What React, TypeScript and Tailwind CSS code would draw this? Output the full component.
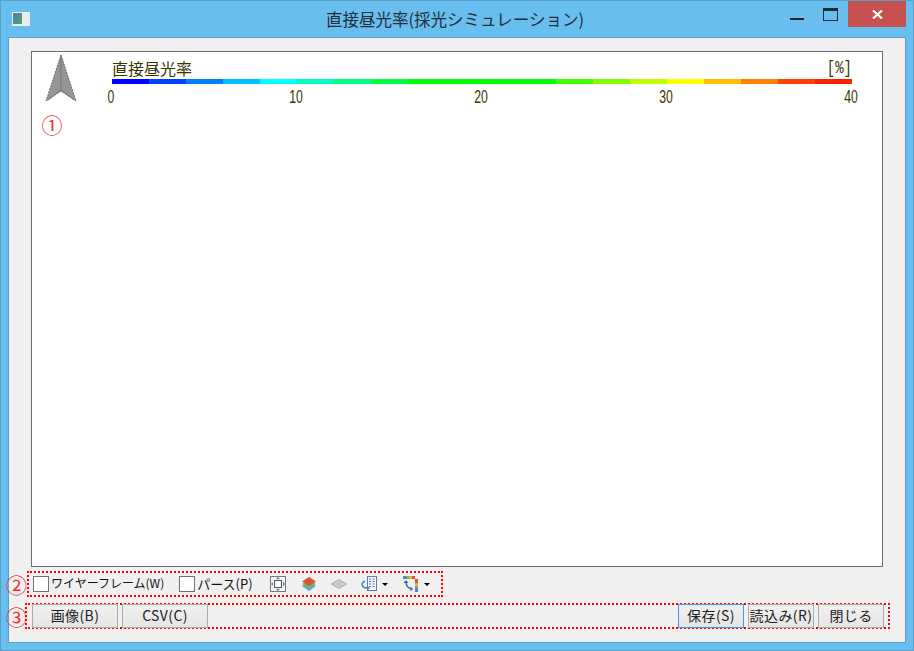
const font = "font-['Noto_Sans_CJK_JP','Noto_Sans',sans-serif]";

const legendColors = [
  "#0000ff", "#0040ff", "#0080ff", "#00c0ff", "#00ffff",
  "#00ffc0", "#00ff80", "#00ff40", "#00ff00", "#00ff00",
  "#00ff00", "#00ff00", "#40ff00", "#80ff00", "#c0ff00",
  "#ffff00", "#ffc000", "#ff8000", "#ff4000", "#ff2000",
];

const ticks = ["0", "10", "20", "30", "40"];

function NorthArrow() {
  return (
    <svg width="32" height="50" viewBox="0 0 32 50" className="shrink-0">
      <path d="M16 1 L31 47 L16 37 L1 47 Z" fill="#969696" stroke="#6a6a6a" strokeWidth="1" strokeDasharray="2 1" />
      <path d="M16 1 V37 M16 36 L3 46 M16 36 L29 46" fill="none" stroke="#777" strokeWidth="1" />
    </svg>
  );
}

function Legend() {
  return (
    <div className="flex w-[750px] flex-col">
      <div className="flex h-[20px] w-[740px] items-center justify-between text-[16px] leading-none text-[#3a3300]">
        <span className={font}>直接昼光率</span>
        <span className="origin-right scale-y-[1.25] font-['Liberation_Mono',monospace] text-[14px]">[%]</span>
      </div>
      <div className="mt-[1px] flex h-[5px] w-[740px]">
        {legendColors.map((c, i) => (
          <div key={i} className="h-full w-[37px]" style={{ backgroundColor: c }} />
        ))}
      </div>
      <div className="-ml-[11px] mt-[4px] flex w-[760px] justify-between font-['Liberation_Sans',sans-serif] text-[18px] leading-[18px] text-[#3a3300]">
        {ticks.map((t) => (
          <span key={t} className="w-[20px] scale-x-[0.68] text-center">{t}</span>
        ))}
      </div>
    </div>
  );
}

function CheckItem({ label, size }: { label: string; size: string }) {
  return (
    <label className="flex items-center gap-[2px]">
      <span className="h-[16px] w-[16px] border border-[#707070] bg-white" />
      <span className={`${font} ${size} pb-[2px] leading-none text-[#111]`}>{label}</span>
    </label>
  );
}

function FitIcon() {
  return (
    <svg width="16" height="16" viewBox="0 0 16 16">
      <rect x="0.5" y="0.5" width="15" height="15" fill="#f4f4f4" stroke="#777" />
      <rect x="4.5" y="4.5" width="7" height="7" fill="#fff" stroke="#555" />
      <path d="M8 1 L10 3 H6 Z M8 15 L10 13 H6 Z M1 8 L3 6 V10 Z M15 8 L13 6 V10 Z" fill="#3d83c4" />
    </svg>
  );
}

function LayersIcon() {
  return (
    <svg width="16" height="16" viewBox="0 0 16 16">
      <path d="M1 10 L8 6 L15 10 L8 15 Z" fill="#5da8c4" />
      <path d="M1 8 L8 4 L15 8 L8 12 Z" fill="#80b070" />
      <path d="M1 5.500 L8 1 L15 5.500 L8 10 Z" fill="#d9552f" />
    </svg>
  );
}

function PlaneIcon() {
  return (
    <svg width="16" height="10" viewBox="0 0 16 10">
      <path d="M0.500 5 L8 0.500 L15.500 5 L8 9.500 Z" fill="#d4d4d4" stroke="#a5a5a5" />
      <path d="M4 2.800 L12 7.200 M12 2.800 L4 7.200 M8 0.500 V9.500" stroke="#bdbdbd" fill="none" />
    </svg>
  );
}

function BuildingIcon() {
  return (
    <svg width="16" height="16" viewBox="0 0 16 16">
      <rect x="6.500" y="0.500" width="9" height="14" fill="#f2f6fa" stroke="#5f7f9f" />
      <path d="M8 3h2M11.500 3h2M8 5.500h2M11.500 5.500h2M8 8h2M11.500 8h2M8 10.500h2M11.500 10.500h2" stroke="#5f7f9f" />
      <path d="M4 5 Q0 7 1.500 10 Q3 12.500 7 12" fill="none" stroke="#3d83c4" strokeWidth="1.500" />
      <path d="M6 9.500 L9 12 L6 14.500 Z" fill="#3d83c4" />
    </svg>
  );
}

function PaletteIcon() {
  return (
    <svg width="16" height="16" viewBox="0 0 16 16">
      <rect x="0" y="0" width="3" height="3" fill="#4f86c6" />
      <rect x="3" y="0" width="3" height="3" fill="#7fb069" />
      <rect x="6" y="0" width="3" height="3" fill="#e8b04a" />
      <rect x="9" y="0" width="3" height="3" fill="#d9552f" />
      <rect x="12" y="3" width="3" height="4" fill="#d9552f" />
      <rect x="12" y="7" width="3" height="3" fill="#e8b04a" />
      <rect x="12" y="10" width="3" height="2" fill="#7fb069" />
      <rect x="12" y="12" width="3" height="4" fill="#4f86c6" />
      <path d="M3 6 Q3 12 9 13" fill="none" stroke="#2f6fb5" strokeWidth="1.500" />
      <path d="M3 4 L5.500 7 H0.500 Z M10 13 L7.500 10.500 V15.500 Z" fill="#2f6fb5" />
    </svg>
  );
}

function Caret() {
  return <span className="ml-[5px] h-0 w-0 border-x-[3px] border-t-[3px] border-x-transparent border-t-black" />;
}

function Btn({ label, w, focus }: { label: string; w: string; focus?: boolean }) {
  return (
    <button
      className={`${w} h-[24px] border bg-gradient-to-b from-[#f0f0f0] to-[#e5e5e5] pb-[3px] ${font} text-[14px] leading-none tracking-[0.4px] text-[#222] ${
        focus ? "border-[#3c9ae8]" : "border-[#adadad]"
      }`}
    >
      {label}
    </button>
  );
}

export default function App() {
  return (
    <div className="flex h-[651px] w-[914px] flex-col overflow-hidden border border-[#5a9fcb] bg-[#69bef0]">
      {/* title bar */}
      <div className="flex h-[36px] shrink-0 items-start">
        <div className="ml-[11px] mt-[11px] flex h-[14px] w-[18px] bg-[#e8eeee]">
          <div className="ml-[1px] mt-[1px] h-[11px] w-[9px] bg-gradient-to-br from-[#4a7fa8] to-[#5aa070]" />
        </div>
        <div className={`${font} flex-1 pl-[90px] pt-[5px] text-center text-[16.500px] leading-[27px] text-[#222d38]`}>
          直接昼光率(採光シミュレーション)
        </div>
        <div className="flex items-start">
          <div className="mr-[19px] mt-[17px] h-[2px] w-[14px] bg-[#222]" />
          <div className="mr-[10px] mt-[7px] h-[13px] w-[15px] border border-t-[3px] border-[#1d2b38]" />
          <div className="mr-[7px] flex h-[26px] w-[58px] items-center justify-center bg-[#c75050]">
            <svg width="11" height="9" viewBox="0 0 11 9">
              <path d="M1 0.500 L10 8.500 M10 0.500 L1 8.500" stroke="#fff" strokeWidth="2.200" />
            </svg>
          </div>
        </div>
      </div>

      {/* client area */}
      <div className="mx-[7px] flex h-[606px] flex-col border border-[#5a9fcb] bg-[#f0f0f0]">
        <div className="ml-[22px] mt-[13px] flex h-[516px] w-[852px] flex-col border border-[#6d6d6d] bg-white pl-[13px] pt-[2px]">
          <div className="flex">
            <NorthArrow />
            <div className="ml-[35px] mt-[4px]">
              <Legend />
            </div>
          </div>
          <div className="-ml-[3px] mt-[8px] flex h-[20px] w-[20px] items-center justify-center">
            <span className={`${font} text-[21px] leading-none text-[#f53030]`}>①</span>
          </div>
        </div>

        {/* toolbar */}
        <div className="mt-[4px] flex h-[26px] items-center">
          <span className={`${font} -ml-[3px] w-[21px] text-center text-[21px] leading-none text-[#f53030]`}>②</span>
          <div className="flex h-[26px] w-[416px] items-center border-[2px] border-dotted border-[#ff0000] pl-[4px]">
            <CheckItem label="ワイヤーフレーム(W)" size="text-[12px]" />
            <div className="ml-[15px]">
              <CheckItem label="パース(P)" size="text-[13px]" />
            </div>
            <div className="ml-[17px] flex items-center">
              <FitIcon />
              <div className="ml-[15px]"><LayersIcon /></div>
              <div className="ml-[14px]"><PlaneIcon /></div>
              <div className="ml-[14px]"><BuildingIcon /></div>
              <Caret />
              <div className="ml-[15px]"><PaletteIcon /></div>
              <Caret />
            </div>
          </div>
        </div>

        {/* buttons */}
        <div className="mt-[6px] flex h-[26px] items-center">
          <span className={`${font} -ml-[3px] w-[19px] text-center text-[21px] leading-none text-[#f53030]`}>③</span>
          <div className="flex h-[26px] w-[865px] items-center justify-between border-[2px] border-dotted border-[#ff0000] pl-[5px] pr-[4px]">
            <div className="flex gap-[4px]">
              <Btn label="画像(B)" w="w-[86px]" />
              <Btn label="CSV(C)" w="w-[86px]" />
            </div>
            <div className="flex gap-[4px]">
              <Btn label="保存(S)" w="w-[66px]" focus />
              <Btn label="読込み(R)" w="w-[66px]" />
              <Btn label="閉じる" w="w-[66px]" />
            </div>
          </div>
        </div>
      </div>
    </div>
  );
}
